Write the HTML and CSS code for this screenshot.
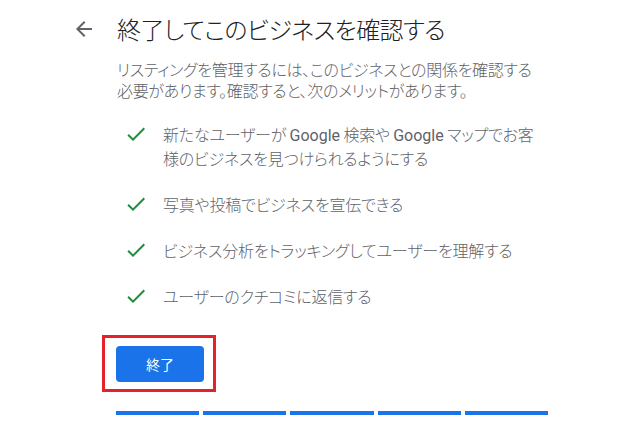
FILE: index.html
```html
<!DOCTYPE html>
<html lang="ja">
<head>
<meta charset="utf-8">
<link rel="stylesheet" href="styles.css">
</head>
<body>
<div class="page">
  <div class="header">
    <span class="back">
      <svg width="24" height="24" viewBox="0 0 24 24"><path d="M20 11H7.83l5.59-5.59L12 4l-8 8 8 8 1.41-1.41L7.83 13H20v-2z" fill="#5f6368"/></svg>
    </span>
    <h1 class="title">終了してこのビジネスを確認する</h1>
  </div>
  <div class="content">
    <p class="intro">リスティングを管理するには、このビジネスとの関係を確認する<br>必要があります。確認すると、次のメリットがあります。</p>
    <ul class="benefits">
      <li class="item">
        <svg class="check" width="24" height="24" viewBox="0 0 24 24"><path d="M9 16.17L4.83 12l-1.42 1.41L9 19 21 7l-1.41-1.41z" fill="#1e8e3e"/></svg>
        <span class="text">新たなユーザーが <span class="latin">Google</span> 検索や <span class="latin">Google</span> マップでお客<br>様のビジネスを見つけられるようにする</span>
      </li>
      <li class="item">
        <svg class="check" width="24" height="24" viewBox="0 0 24 24"><path d="M9 16.17L4.83 12l-1.42 1.41L9 19 21 7l-1.41-1.41z" fill="#1e8e3e"/></svg>
        <span class="text">写真や投稿でビジネスを宣伝できる</span>
      </li>
      <li class="item">
        <svg class="check" width="24" height="24" viewBox="0 0 24 24"><path d="M9 16.17L4.83 12l-1.42 1.41L9 19 21 7l-1.41-1.41z" fill="#1e8e3e"/></svg>
        <span class="text">ビジネス分析をトラッキングしてユーザーを理解する</span>
      </li>
      <li class="item">
        <svg class="check" width="24" height="24" viewBox="0 0 24 24"><path d="M9 16.17L4.83 12l-1.42 1.41L9 19 21 7l-1.41-1.41z" fill="#1e8e3e"/></svg>
        <span class="text">ユーザーのクチコミに返信する</span>
      </li>
    </ul>
    <div class="highlight">
      <button class="finish">終了</button>
    </div>
    <div class="progress">
      <span class="seg"></span><span class="seg"></span><span class="seg"></span><span class="seg"></span><span class="seg"></span>
    </div>
  </div>
</div>
</body>
</html>
```
FILE: styles.css
```css
html, body {
  margin: 0;
  padding: 0;
  background: #ffffff;
}
body {
  font-family: "Noto Sans CJK JP", Roboto, "Noto Sans", sans-serif;
  font-feature-settings: "palt";
  width: 640px;
  height: 427px;
  overflow: hidden;
}
.page {
  padding: 13px 0 0 72px;
}
.header {
  display: flex;
  align-items: center;
  gap: 21px;
}
.back {
  display: flex;
  width: 24px;
  height: 24px;
}
.title {
  margin: 0;
  font-size: 24px;
  line-height: 32px;
  font-weight: 300;
  letter-spacing: -0.6px;
  color: #202124;
}
.content {
  padding-left: 44px;
}
.intro {
  margin: 14px 0 0 1px;
  font-size: 16px;
  line-height: 21px;
  font-weight: 300;
  letter-spacing: -0.3px;
  color: #5f6368;
}
.benefits {
  list-style: none;
  margin: 21px 0 0 0;
  padding: 0;
  display: flex;
  flex-direction: column;
  gap: 22px;
}
.item {
  display: flex;
  align-items: flex-start;
  gap: 15px;
  padding-left: 8px;
}
.check {
  flex: none;
}
.text {
  font-size: 16px;
  line-height: 24px;
  font-weight: 300;
  letter-spacing: -0.2px;
  color: #5f6368;
}
.latin {
  font-family: Roboto, sans-serif;
  font-weight: 400;
  letter-spacing: 0;
  line-height: 0;
}
.highlight {
  position: relative;
  display: inline-block;
  margin-top: 38px;
}
.highlight::after {
  content: "";
  position: absolute;
  left: -14px;
  top: -11px;
  right: -12px;
  bottom: -10px;
  border: 3px solid #e52129;
}
.finish {
  display: block;
  width: 88px;
  height: 36px;
  border: none;
  border-radius: 4px;
  background: #1a73e8;
  color: #ffffff;
  font-family: "Noto Sans CJK JP", Roboto, sans-serif;
  font-size: 14px;
  padding: 0;
}
.progress {
  display: flex;
  gap: 4px;
  width: 432px;
  margin-top: 29px;
}
.seg {
  flex: 1;
  height: 4px;
  background: #1a73e8;
}
```
